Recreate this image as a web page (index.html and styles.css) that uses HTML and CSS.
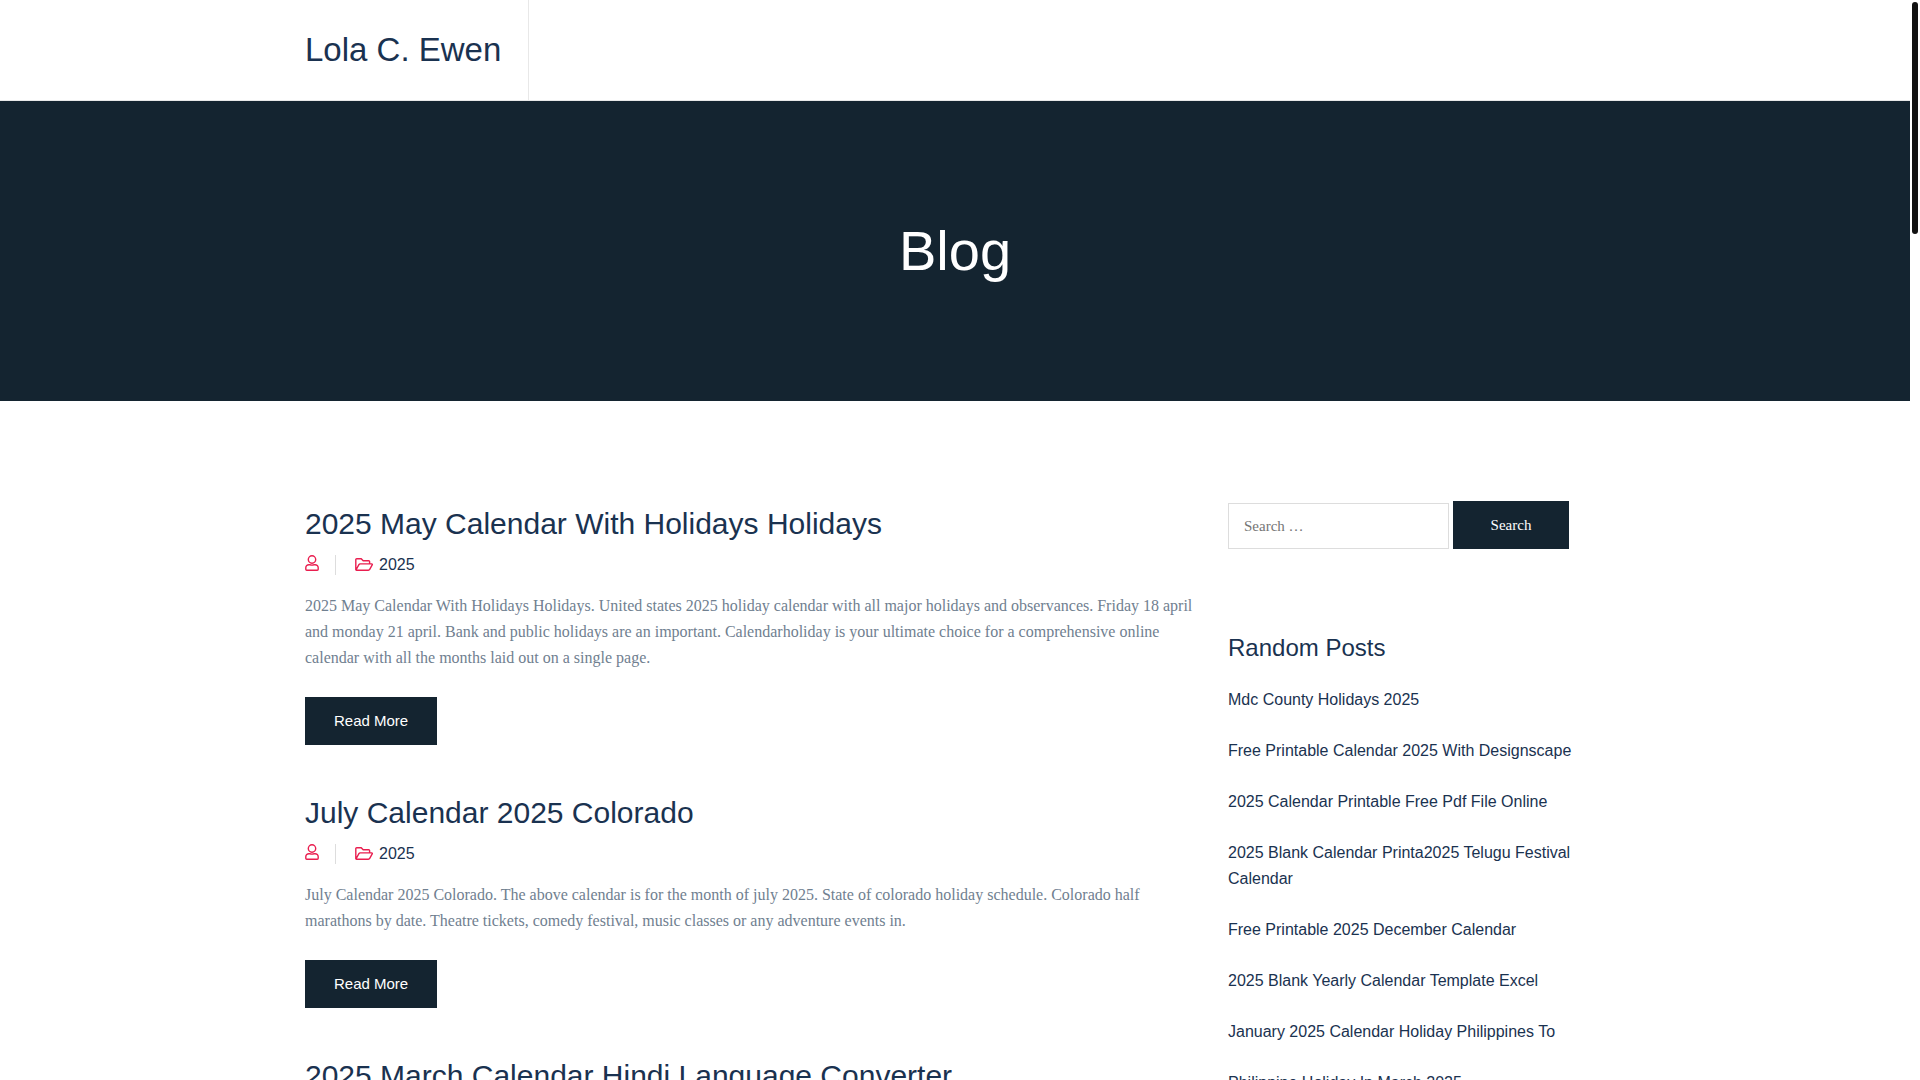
FILE: index.html
```html
<!DOCTYPE html>
<html lang="en">
<head>
<meta charset="utf-8">
<meta name="viewport" content="width=device-width, initial-scale=1">
<title>Blog - Lola C. Ewen</title>
<link rel="stylesheet" href="styles.css">
</head>
<body>
<svg class="sprite" aria-hidden="true">
  <symbol id="icon-user" viewBox="0 0 14 16">
    <circle cx="7" cy="4.500" r="3.700"/>
    <path d="M3.900 9.700h.8c1.500.6 3.100.6 4.600 0h.8a3.100 3.100 0 0 1 3.100 3.100v1.500a.9.900 0 0 1-.9.900H1.700a.9.900 0 0 1-.9-.9v-1.500a3.100 3.100 0 0 1 3.100-3.100z"/>
  </symbol>
  <symbol id="icon-folder" viewBox="0 0 18 16">
    <path d="M.8 12.900V2.600a.9.900 0 0 1 .9-.9h4.500l2 2h5.500a.9.900 0 0 1 .9.900v2.200M1 13l2.900-5.300a1.500 1.500 0 0 1 1.300-.8h11.400c.6 0 .9.500.6 1l-2.500 4.500a1.500 1.500 0 0 1-1.300.8H1.500a.7.700 0 0 1-.7-.7"/>
  </symbol>
</svg>
<div class="page">
  <header class="site-header">
    <div class="container">
      <a class="brand" href="#">Lola C. Ewen</a>
    </div>
  </header>
  <section class="hero">
    <h1 class="hero-title">Blog</h1>
  </section>
  <div class="container content">
    <main class="posts">
      <article class="post">
        <h2 class="post-title"><a href="#">2025 May Calendar With Holidays Holidays</a></h2>
        <div class="meta">
          <a class="author" href="#" aria-label="Author"><svg class="icon icon-user"><use href="#icon-user"/></svg></a>
          <a class="category" href="#"><svg class="icon icon-folder"><use href="#icon-folder"/></svg>2025</a>
        </div>
        <p class="excerpt">2025 May Calendar With Holidays Holidays. United states 2025 holiday calendar with all major holidays and observances. Friday 18 april and monday 21 april. Bank and public holidays are an important. Calendarholiday is your ultimate choice for a comprehensive online calendar with all the months laid out on a single page.</p>
        <a class="button" href="#">Read More</a>
      </article>
      <article class="post">
        <h2 class="post-title"><a href="#">July Calendar 2025 Colorado</a></h2>
        <div class="meta">
          <a class="author" href="#" aria-label="Author"><svg class="icon icon-user"><use href="#icon-user"/></svg></a>
          <a class="category" href="#"><svg class="icon icon-folder"><use href="#icon-folder"/></svg>2025</a>
        </div>
        <p class="excerpt">July Calendar 2025 Colorado. The above calendar is for the month of july 2025. State of colorado holiday schedule. Colorado half marathons by date. Theatre tickets, comedy festival, music classes or any adventure events in.</p>
        <a class="button" href="#">Read More</a>
      </article>
      <article class="post">
        <h2 class="post-title"><a href="#">2025 March Calendar Hindi Language Converter</a></h2>
      </article>
    </main>
    <aside class="sidebar">
      <form class="search" role="search">
        <input class="search-field" type="search" placeholder="Search …" aria-label="Search for">
        <button class="search-submit" type="submit">Search</button>
      </form>
      <section>
        <h2 class="widget-title">Random Posts</h2>
        <ul class="post-list">
          <li><a href="#">Mdc County Holidays 2025</a></li>
          <li><a href="#">Free Printable Calendar 2025 With Designscape</a></li>
          <li><a href="#">2025 Calendar Printable Free Pdf File Online</a></li>
          <li><a href="#">2025 Blank Calendar Printa2025 Telugu Festival Calendar</a></li>
          <li><a href="#">Free Printable 2025 December Calendar</a></li>
          <li><a href="#">2025 Blank Yearly Calendar Template Excel</a></li>
          <li><a href="#">January 2025 Calendar Holiday Philippines To</a></li>
          <li><a href="#">Philippine Holiday In March 2025</a></li>
        </ul>
      </section>
    </aside>
  </div>
</div>
<div class="scroll-rail" aria-hidden="true"><div class="scroll-thumb"></div></div>
</body>
</html>
```
FILE: styles.css
```css
* { box-sizing: border-box; }
body {
  margin: 0;
  display: flex;
  height: 100vh;
  background: #fff;
  color: #708090;
  font: 16px/26px "Liberation Serif", "Times New Roman", serif;
}
h1, h2, p, ul { margin: 0; padding: 0; }
a { color: #1a3250; text-decoration: none; }
.sprite { position: absolute; width: 0; height: 0; }
.page { flex: 1; overflow-y: auto; scrollbar-width: none; }
.container { max-width: 1330px; margin: 0 auto; padding: 0 15px; }

.site-header { border-bottom: 1px solid #e8e8e8; }
.brand {
  display: inline-block;
  vertical-align: top;
  padding-right: 27px;
  border-right: 1px solid #e8e8e8;
  line-height: 100px;
  font-size: 33px;
}
.brand, h1, h2, .meta, .button, .post-list {
  font-family: "Liberation Sans", Arial, sans-serif;
  font-weight: 400;
}

.hero {
  display: flex;
  align-items: center;
  justify-content: center;
  min-height: 300px;
  background: #142430;
}
.hero-title { color: #fff; font-size: 56px; line-height: 72px; }

.content { display: grid; grid-template-columns: 71% 29%; padding-top: 100px; }
.posts { padding-right: 30px; }
.post { margin-bottom: 45px; }
.post-title { font-size: 30px; line-height: 45px; }
.meta { display: flex; align-items: center; margin: 6px 0 15px; }
.author {
  display: flex;
  height: 20px;
  margin-right: 19px;
  padding-right: 16px;
  border-right: 1px solid #ddd;
}
.category { display: flex; align-items: center; gap: 6px; }
.icon { height: 16px; fill: none; stroke: #e91e4f; stroke-width: 1.4; }
.icon-user { width: 14px; }
.icon-folder { width: 18px; }
.excerpt { margin-bottom: 26px; }
.button {
  display: inline-block;
  vertical-align: top;
  padding: 0 29px;
  background: #142430;
  color: #fff;
  font-size: 15px;
  line-height: 48px;
}

.search { display: flex; align-items: flex-end; gap: 4px; margin-bottom: 81px; }
.search-field, .search-submit { font: 15px/26px "Liberation Serif", "Times New Roman", serif; }
.search-field {
  width: 221px;
  height: 46px;
  padding: 0 15px;
  border: 1px solid #ddd;
  background: #fff;
}
.search-field::placeholder { color: #757575; }
.search-submit {
  width: 116px;
  height: 48px;
  border: 0;
  background: #142430;
  color: #fff;
}
.widget-title { margin-bottom: 21px; color: #1a3250; font-size: 24px; line-height: 36px; }
.post-list { list-style: none; }
.post-list li { margin-bottom: 25px; }

.scroll-rail { width: 10px; padding: 2px; }
.scroll-thumb { height: 232px; border-radius: 3px; background: #111; }
```
